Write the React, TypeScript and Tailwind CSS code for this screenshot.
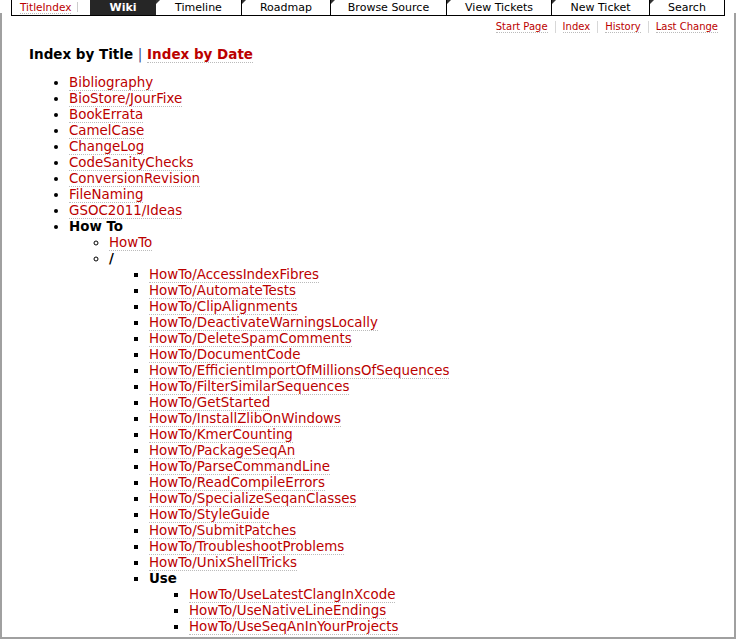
import React from "react";

const font = { fontFamily: '"DejaVu Sans", Verdana, sans-serif' };

function Tri() {
  return (
    <span className="absolute left-0 top-0 w-0 h-0 border-t-[4px] border-t-[#333] border-r-[4px] border-r-transparent" />
  );
}

function Tab({ w, label }: { w: string; label: string }) {
  return (
    <div className={`relative ${w} h-full bg-white border-r border-black flex items-center justify-center text-[11px] text-black leading-none`}>
      <Tri />
      {label}
    </div>
  );
}

function L({ children }: { children: React.ReactNode }) {
  return (
    <a className="text-[#bb0000] border-b border-dotted border-[#bbb] no-underline" href="#">
      {children}
    </a>
  );
}

const top = [
  "Bibliography",
  "BioStore/JourFixe",
  "BookErrata",
  "CamelCase",
  "ChangeLog",
  "CodeSanityChecks",
  "ConversionRevision",
  "FileNaming",
  "GSOC2011/Ideas",
];

const howto = [
  "AccessIndexFibres",
  "AutomateTests",
  "ClipAlignments",
  "DeactivateWarningsLocally",
  "DeleteSpamComments",
  "DocumentCode",
  "EfficientImportOfMillionsOfSequences",
  "FilterSimilarSequences",
  "GetStarted",
  "InstallZlibOnWindows",
  "KmerCounting",
  "PackageSeqAn",
  "ParseCommandLine",
  "ReadCompileErrors",
  "SpecializeSeqanClasses",
  "StyleGuide",
  "SubmitPatches",
  "TroubleshootProblems",
  "UnixShellTricks",
];

const use = ["UseLatestClangInXcode", "UseNativeLineEndings", "UseSeqAnInYourProjects"];

export default function App() {
  return (
    <div className="w-[736px] h-[639px] bg-white overflow-hidden flex flex-col" style={font}>
      {/* top nav */}
      <div className="h-[15px] flex shrink-0">
        <div className="w-[11px] h-full" />
        <div className="flex h-full border-l border-b border-black box-content">
          <div className="relative w-[78px] h-full bg-white flex items-center">
            <span className="ml-[8px] text-[10.5px] leading-none">
              <span className="text-[#bb0000] border-b border-dotted border-[#bbb]">TitleIndex</span>
            </span>
            <span className="absolute left-[65px] top-[2px] h-[10px] w-px bg-[#ccc]" />
          </div>
          <div className="w-[66px] h-full bg-[#262626] flex items-center justify-center text-[11px] font-bold text-white leading-none">
            Wiki
          </div>
          <Tab w="w-[86px]" label="Timeline" />
          <Tab w="w-[89px]" label="Roadmap" />
          <Tab w="w-[116px]" label="Browse Source" />
          <Tab w="w-[105px]" label="View Tickets" />
          <Tab w="w-[98px]" label="New Ticket" />
          <Tab w="w-[75px]" label="Search" />
        </div>
      </div>
      <div className="flex-1 border-l-2 border-r-2 border-b-2 border-[#a0a0a0] overflow-hidden -mt-[2px]">
        {/* context nav */}
        <div className="flex justify-end pr-[16px] mt-[7px] text-[10px] leading-[14px]">
          <div className="flex items-center">
            <span className="pr-[7px]"><L>Start Page</L></span>
            <span className="w-px h-[12px] bg-[#d7d7d7]" />
            <span className="px-[7px]"><L>Index</L></span>
            <span className="w-px h-[12px] bg-[#d7d7d7]" />
            <span className="px-[7px]"><L>History</L></span>
            <span className="w-px h-[12px] bg-[#d7d7d7]" />
            <span className="pl-[7px]"><L>Last Change</L></span>
          </div>
        </div>
        <div className="pl-[27px] text-[13.4px] leading-[16px] text-black">
          <h1 className="mt-[11px] text-[13.5px] leading-[18px] font-bold">
            Index by Title <span className="text-[#3a4a8a] font-normal">|</span>{" "}
            <L>Index by Date</L>
          </h1>
          <ul className="list-disc pl-[40px] mt-[12px]">
            {top.map((t) => (
              <li key={t}>
                <L>{t}</L>
              </li>
            ))}
            <li>
              <b>How To</b>
              <ul className="list-[circle] pl-[40px]">
                <li>
                  <L>HowTo</L>
                </li>
                <li>
                  <b>/</b>
                  <ul className="list-[square] pl-[40px]">
                    {howto.map((t) => (
                      <li key={t}>
                        <L>HowTo/{t}</L>
                      </li>
                    ))}
                    <li>
                      <b>Use</b>
                      <ul className="list-[square] pl-[40px]">
                        {use.map((t) => (
                          <li key={t}>
                            <L>HowTo/{t}</L>
                          </li>
                        ))}
                      </ul>
                    </li>
                  </ul>
                </li>
              </ul>
            </li>
          </ul>
        </div>
      </div>
    </div>
  );
}
